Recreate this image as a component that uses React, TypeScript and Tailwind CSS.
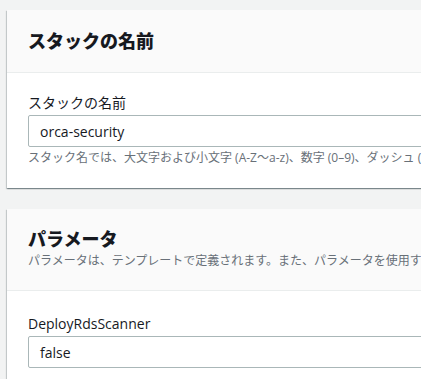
import React from 'react';

const font = { fontFamily: '"Open Sans", "Noto Sans CJK JP", sans-serif' };

const cardShadow =
  'shadow-[0_1px_1px_0_rgba(0,28,36,0.3),1px_1px_1px_0_rgba(0,28,36,0.15),-1px_1px_1px_0_rgba(0,28,36,0.15)]';

interface FieldProps {
  label: string;
  value: string;
  hint?: string;
}

const Field: React.FC<FieldProps> = ({ label, value, hint }) => (
  <div className="flex flex-col">
    <label className="text-[14px] leading-[20px] text-[#16191f]">{label}</label>
    <div className="mt-[2px] h-[32px] border border-[#aab7b8] rounded-[2px] bg-white flex items-center px-[11px] text-[14px] text-[#16191f]">
      {value}
    </div>
    {hint && (
      <p className="mt-[3px] text-[12px] leading-[16px] text-[#687078] whitespace-nowrap">{hint}</p>
    )}
  </div>
);

export default function App() {
  return (
    <div style={font} className="min-h-[379px] w-[421px] overflow-hidden bg-[#f2f3f3] pl-[7px] pt-[10px]">
      <div className="w-[500px] flex flex-col gap-[21px]">
        {/* スタックの名前 */}
        <section className={`bg-white ${cardShadow}`}>
          <div className="h-[63px] bg-[#fafafa] border-b border-[#eaeded] px-[21px] flex items-center">
            <h2 className="text-[18px] font-extrabold leading-[22px] text-[#16191f]">スタックの名前</h2>
          </div>
          <div className="px-[21px] pt-[20px] pb-[22px]">
            <Field
              label="スタックの名前"
              value="orca-security"
              hint="スタック名では、大文字および小文字 (A-Z〜a-z)、数字 (0–9)、ダッシュ (-) を使用することができます。"
            />
          </div>
        </section>

        {/* パラメータ */}
        <section className={`bg-white ${cardShadow}`}>
          <div className="h-[82px] bg-[#fafafa] border-b border-[#eaeded] px-[21px] pt-[19px]">
            <h2 className="text-[18px] font-extrabold leading-[22px] text-[#16191f]">パラメータ</h2>
            <p className="mt-[3px] text-[12px] leading-[16px] text-[#687078] whitespace-nowrap">
              パラメータは、テンプレートで定義されます。また、パラメータを使用すると、スタックを作成または更新する際にカスタム値を入力できます。
            </p>
          </div>
          <div className="px-[21px] pt-[23px] pb-[20px]">
            <Field label="DeployRdsScanner" value="false" />
          </div>
        </section>
      </div>
    </div>
  );
}
